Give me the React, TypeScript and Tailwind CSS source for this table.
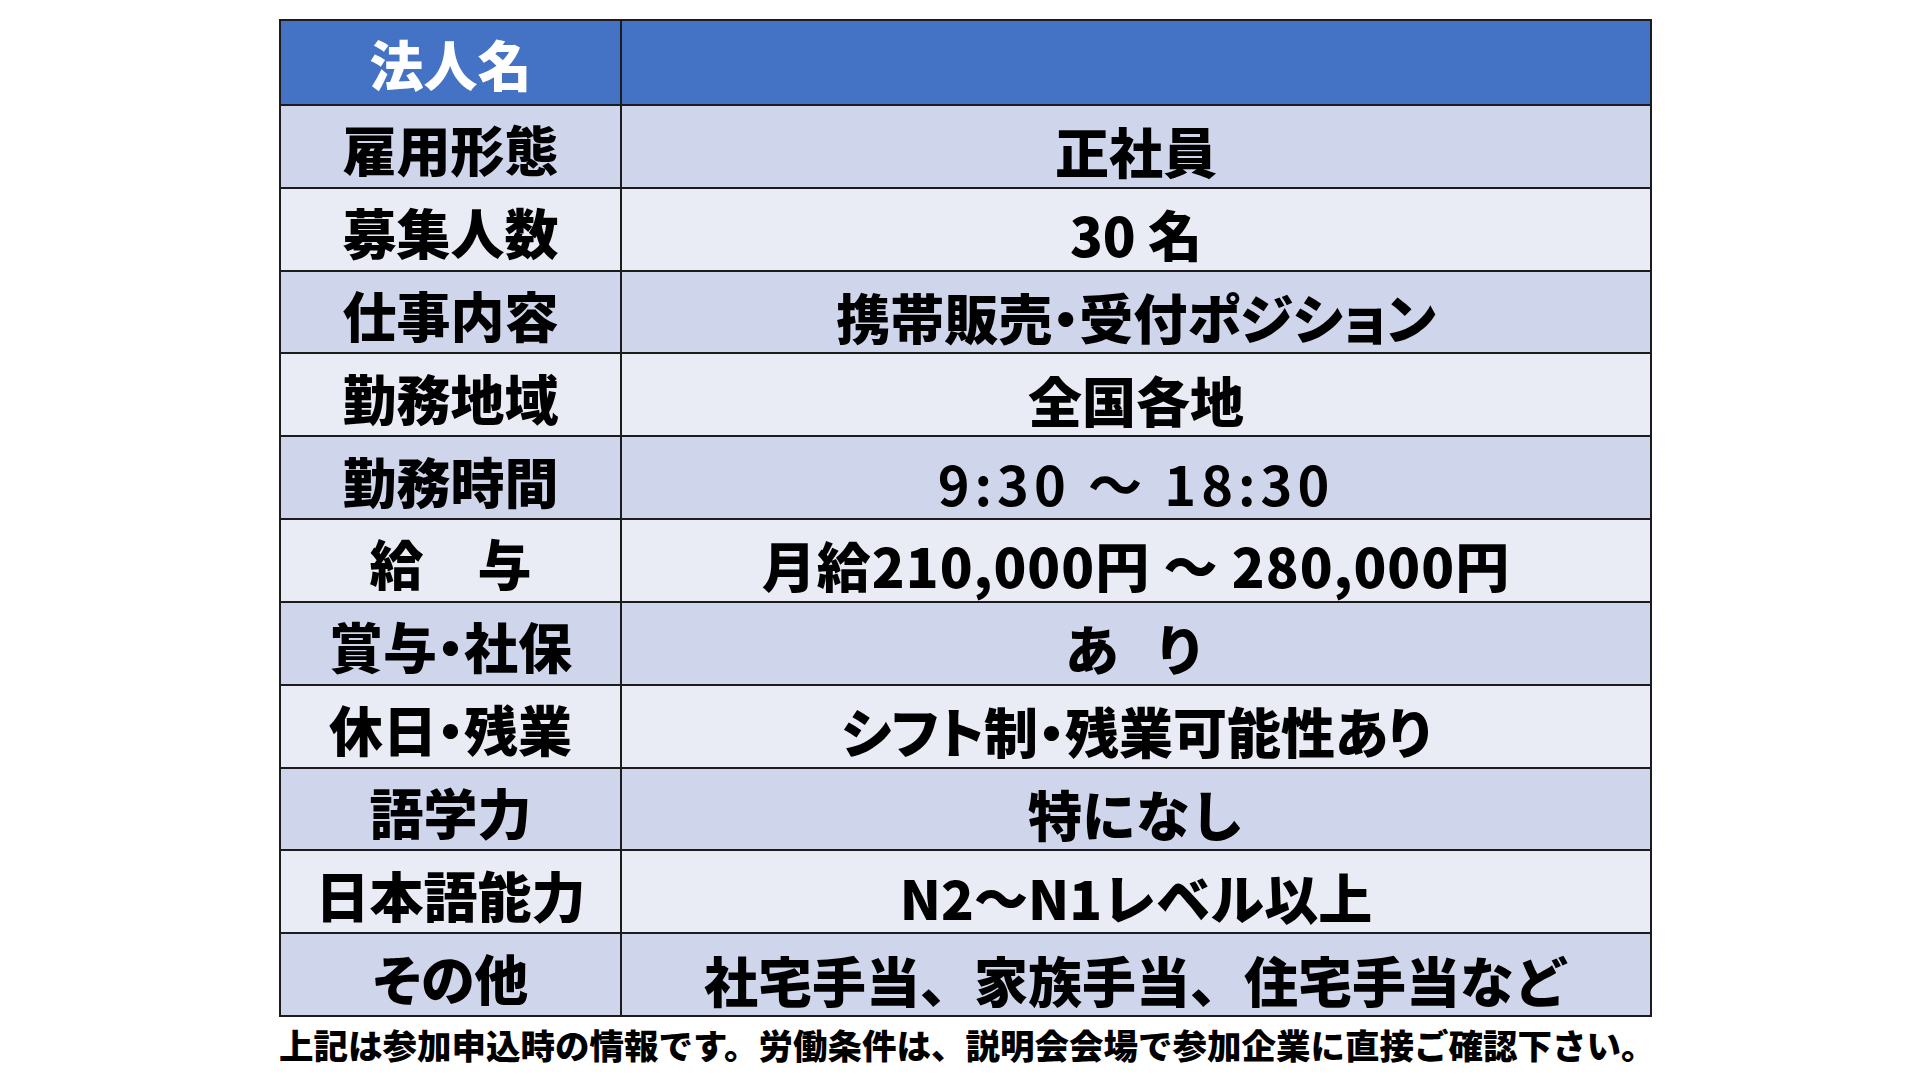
import React from 'react';

type Row = { label: React.ReactNode; value: React.ReactNode; valueClass?: string };

const palt = "[font-feature-settings:'palt']";

const rows: Row[] = [
  { label: '雇用形態', value: '正社員' },
  { label: '募集人数', value: '30 名' },
  { label: '仕事内容', value: '携帯販売・受付ポジション', valueClass: palt },
  { label: '勤務地域', value: '全国各地' },
  { label: '勤務時間', value: '9:30 ～ 18:30', valueClass: 'font-bold tracking-[5px]' },
  { label: '給　与', value: '月給210,000円 ～ 280,000円', valueClass: 'tracking-[1px]' },
  {
    label: '賞与・社保',
    value: (
      <span className="flex gap-[34px]">
        <span>あ</span>
        <span>り</span>
      </span>
    ),
  },
  { label: '休日・残業', value: 'シフト制・残業可能性あり', valueClass: palt },
  { label: '語学力', value: '特になし' },
  { label: '日本語能力', value: 'N2～N1レベル以上' },
  { label: 'その他', value: '社宅手当、家族手当、住宅手当など' },
];

const App: React.FC = () => {
  return (
    <div className="w-[1920px] h-[1080px] bg-white font-['Noto_Sans_CJK_JP','Noto_Sans',sans-serif] text-black">
      <div className="pl-[279px] pt-[19px]">
        <div className="w-[1373px] h-[998px] border-2 border-[#1c1c1c] grid grid-rows-12">
          <div className="grid grid-cols-[341px_1fr] bg-[#4472c4]">
            <div className="border-r-2 border-[#1c1c1c] flex items-center justify-center pt-[4px] text-[54px] font-black text-white leading-none">
              法人名
            </div>
            <div />
          </div>
          {rows.map((r, i) => (
            <div
              key={i}
              className={`grid grid-cols-[341px_1fr] border-t-2 border-[#1c1c1c] ${i % 2 === 0 ? 'bg-[#cfd5ea]' : 'bg-[#e9ebf5]'}`}
            >
              <div className="border-r-2 border-[#1c1c1c] flex items-center justify-center pt-[6px] text-[54px] font-black leading-none whitespace-nowrap [font-feature-settings:'palt']">
                {r.label}
              </div>
              <div className={`flex items-center justify-center pt-[10px] text-[54px] font-black leading-none whitespace-nowrap ${r.valueClass ?? ''}`}>
                {r.value}
              </div>
            </div>
          ))}
        </div>
        <p className="mt-[10px] text-[34.5px] font-black leading-none whitespace-nowrap">
          上記は参加申込時の情報です。労働条件は、説明会会場で参加企業に直接ご確認下さい。
        </p>
      </div>
    </div>
  );
};

export default App;
